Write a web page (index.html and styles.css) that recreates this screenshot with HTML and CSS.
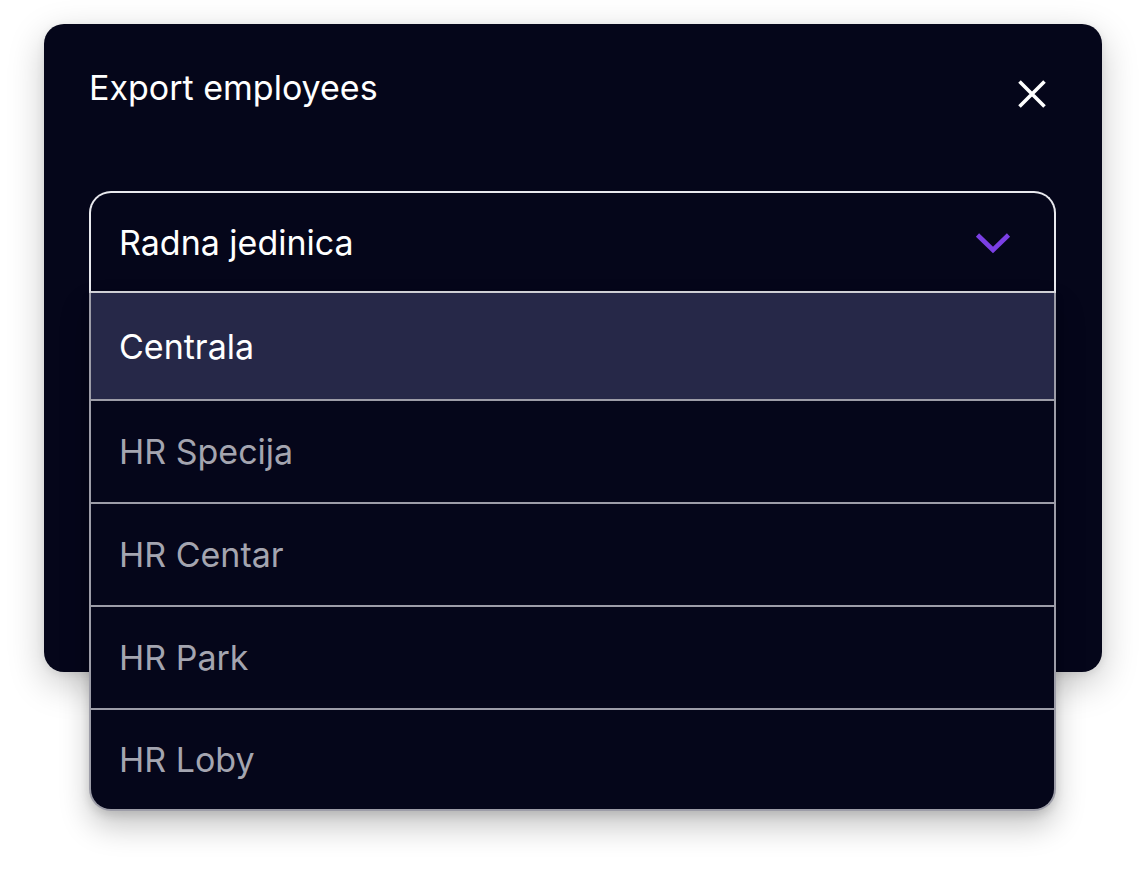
FILE: index.html
```html
<!DOCTYPE html>
<html lang="en">
<head>
<meta charset="utf-8">
<title>Export employees</title>
<link rel="stylesheet" href="styles.css">
</head>
<body>
<div class="modal">
  <div class="modal-header">
    <h2 class="modal-title">Export employees</h2>
    <button class="close-btn" aria-label="Close">
      <svg width="30" height="30" viewBox="0 0 30 30"><path d="M2.5 2.5 L27.5 27.5 M27.5 2.5 L2.5 27.5" stroke="#ffffff" stroke-width="3.6" stroke-linecap="butt" fill="none"/></svg>
    </button>
  </div>
  <div class="select-wrap">
    <div class="select">
      <span class="select-label">Radna jedinica</span>
      <svg class="chevron" width="36" height="22" viewBox="0 0 36 22"><path d="M2.5 3 L18 18 L33.5 3" stroke="#7b3fe4" stroke-width="4.6" fill="none"/></svg>
    </div>
    <ul class="menu">
      <li class="option option-active">Centrala</li>
      <li class="option">HR Specija</li>
      <li class="option">HR Centar</li>
      <li class="option">HR Park</li>
      <li class="option">HR Loby</li>
    </ul>
  </div>
</div>
</body>
</html>
```

FILE: styles.css
```css
html, body {
  margin: 0;
  padding: 0;
  background: #ffffff;
}

body {
  font-family: Inter, "Noto Sans", "Liberation Sans", sans-serif;
  width: 1146px;
  height: 876px;
  overflow: hidden;
}

.modal {
  box-sizing: border-box;
  margin: 24px 0 0 44px;
  width: 1058px;
  height: 648px;
  padding: 0 45px;
  background: #05061a;
  border-radius: 20px;
  box-shadow: 0 12px 36px rgba(0, 0, 0, 0.22), 0 2px 8px rgba(0, 0, 0, 0.08);
}

.modal-header {
  display: flex;
  justify-content: space-between;
  align-items: flex-start;
  height: 167px;
}

.modal-title {
  margin: 0;
  padding-top: 44px;
  font-size: 34px;
  font-weight: 400;
  line-height: 40px;
  color: #ffffff;
  letter-spacing: 0;
}

.close-btn {
  margin: 55px 10px 0 0;
  padding: 0;
  width: 30px;
  height: 30px;
  border: none;
  background: transparent;
  display: flex;
}

.select-wrap {
  position: relative;
  width: 967px;
}

.select {
  box-sizing: border-box;
  height: 102px;
  display: flex;
  align-items: center;
  justify-content: space-between;
  padding: 0 43px 0 28px;
  border: 2px solid #e9e9ee;
  border-bottom-color: #d8d8de;
  border-radius: 22px 22px 0 0;
  color: #ffffff;
  font-size: 34px;
}

.chevron {
  margin-top: 2px;
}

.menu {
  position: absolute;
  top: 100%;
  left: 0;
  right: 0;
  margin: 0;
  padding: 0;
  list-style: none;
  background: #05061a;
  border: 2px solid #9d9da8;
  border-top: none;
  border-radius: 0 0 22px 22px;
  overflow: hidden;
  box-shadow: 0 16px 30px rgba(0, 0, 0, 0.22), 0 4px 10px rgba(0, 0, 0, 0.12);
}

.option {
  box-sizing: border-box;
  height: 103px;
  display: flex;
  align-items: center;
  padding: 0 28px;
  font-size: 34px;
  color: #a4a5b0;
  border-bottom: 2px solid #9d9da8;
}

.option:first-child {
  height: 108px;
}

.option:last-child {
  height: 99px;
  border-bottom: none;
}

.option-active {
  background: #262848;
  color: #ffffff;
}
```
